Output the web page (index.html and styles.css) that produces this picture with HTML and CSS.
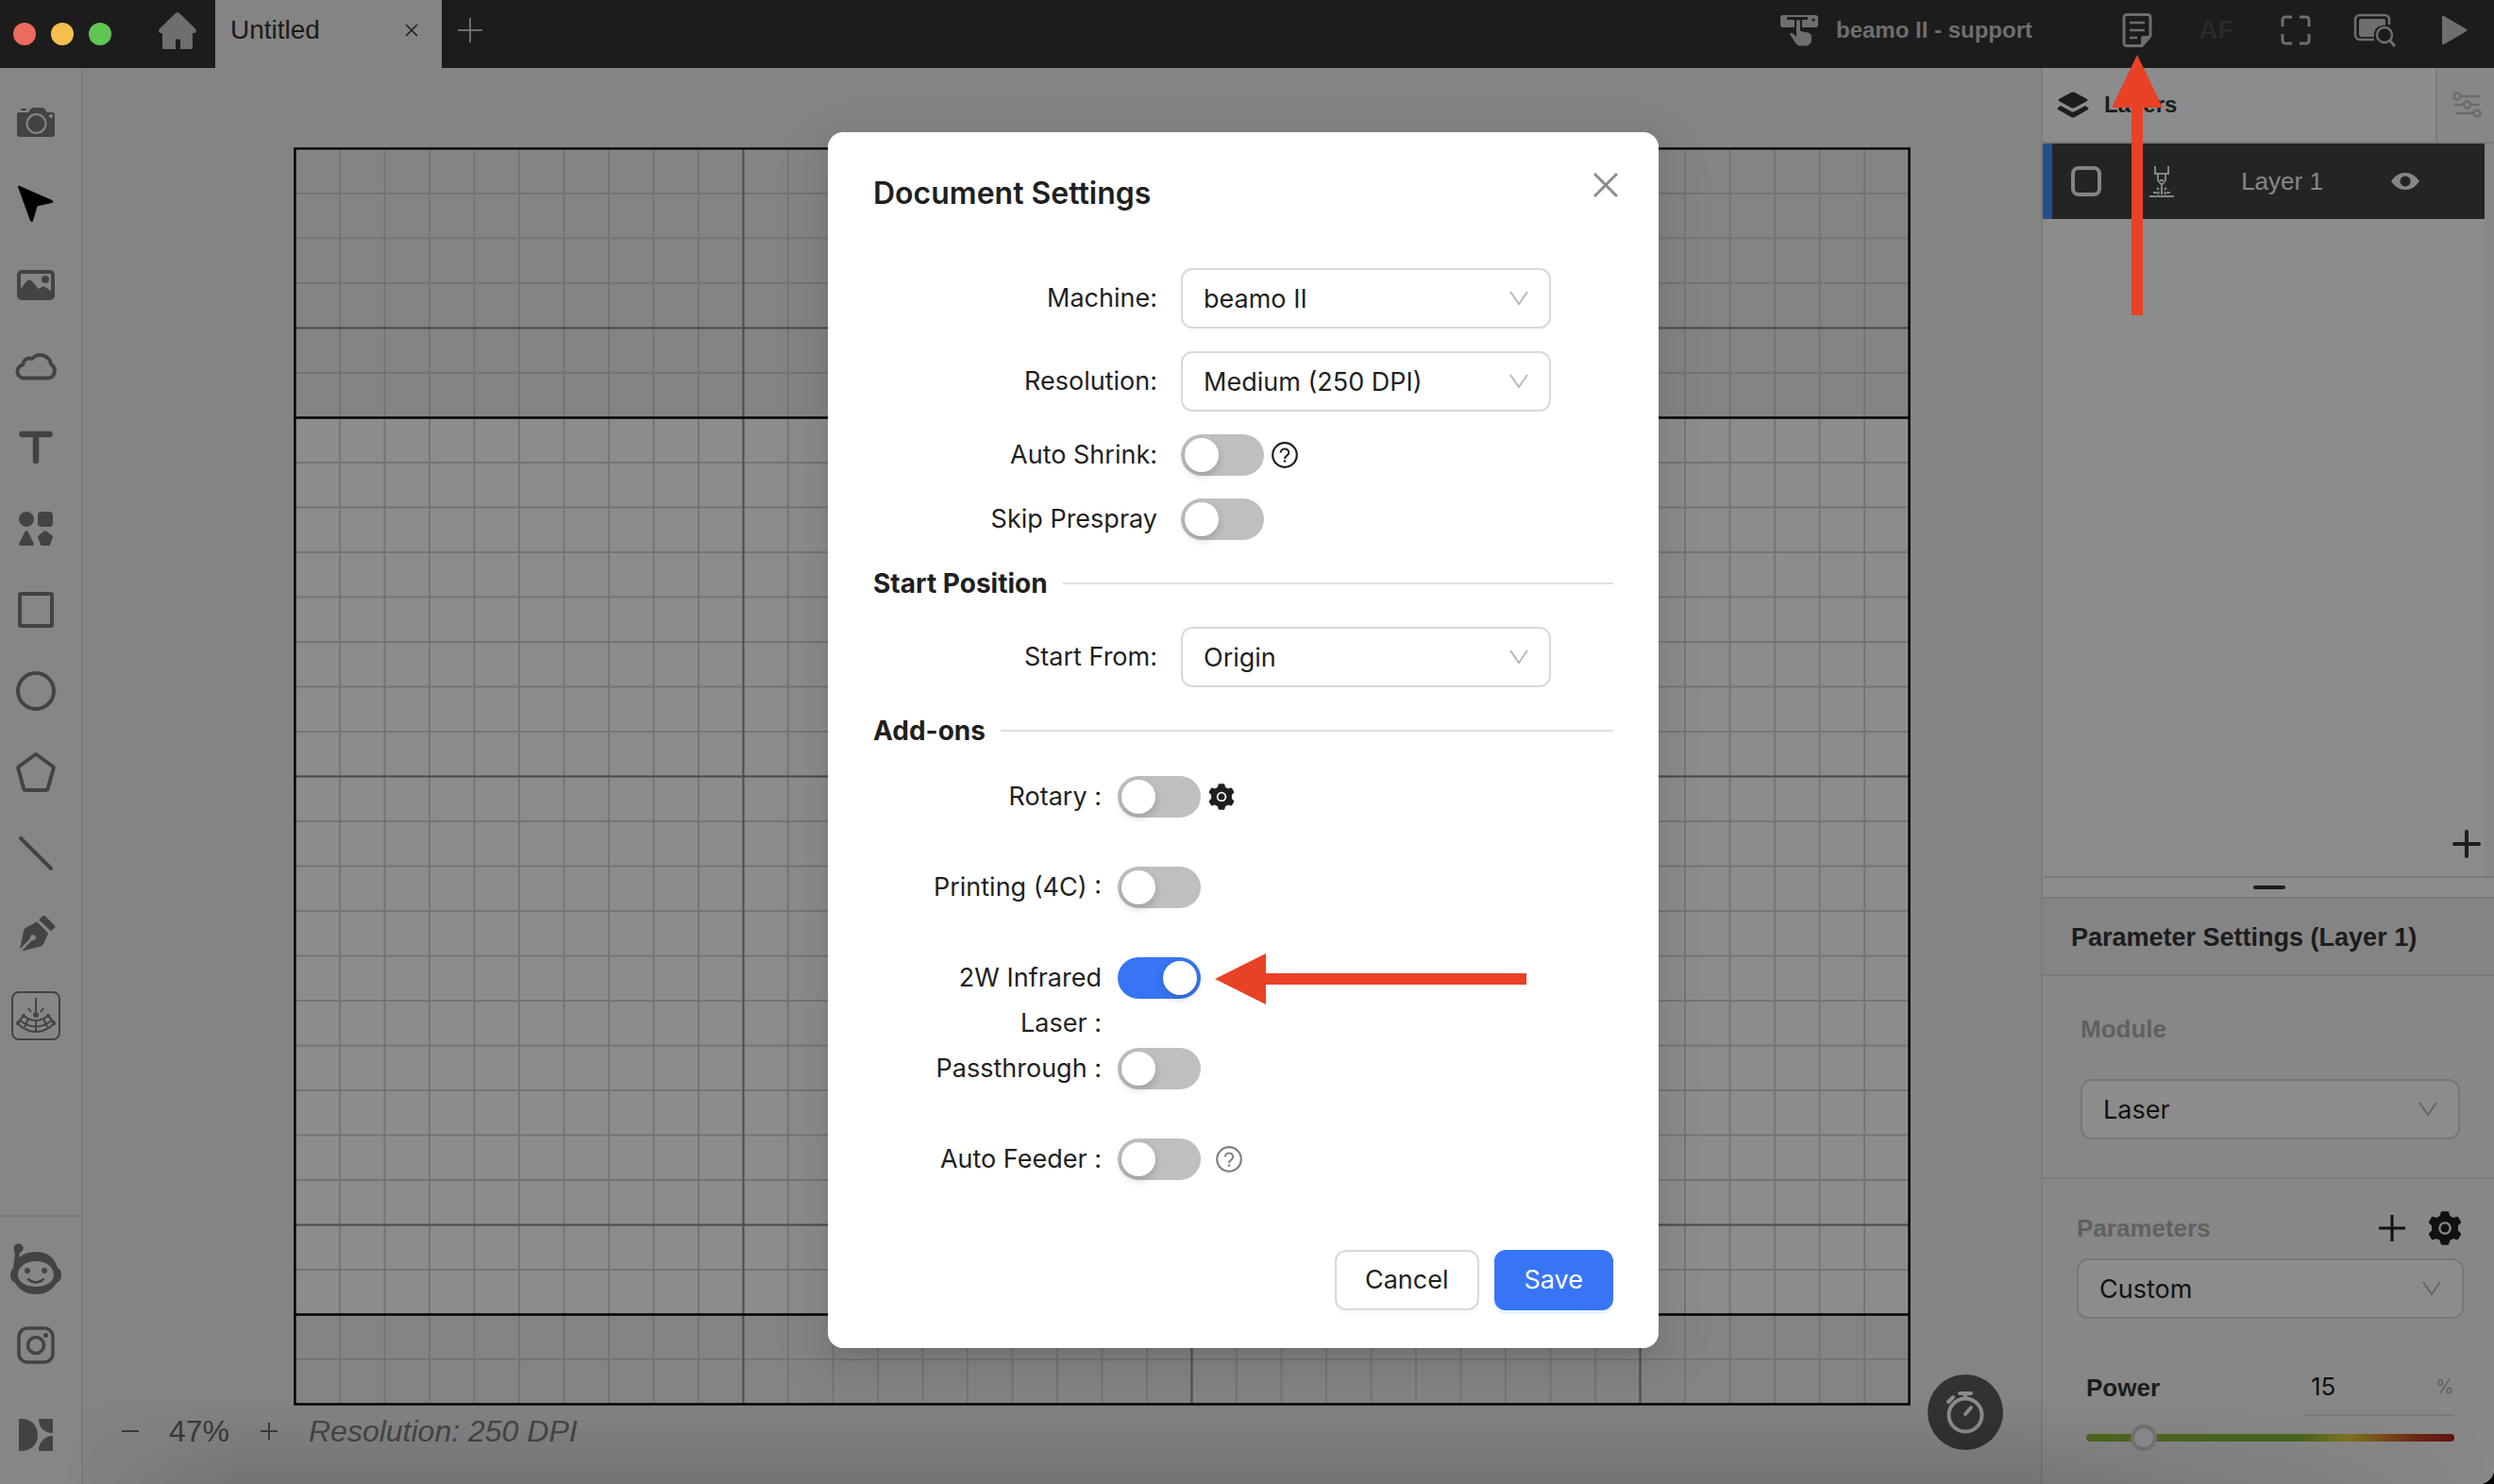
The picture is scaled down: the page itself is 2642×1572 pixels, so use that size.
FILE: index.html
```html
<!DOCTYPE html>
<html lang="en">
<head>
    <meta charset="UTF-8">
    <meta name="viewport" content="width=device-width, initial-scale=1.0">
    <title>Untitled</title>
    <link rel="stylesheet" href="styles.css">
</head>
<body>
    <div class="app">
        <!-- Title bar -->
        <header class="titlebar">
            <div class="traffic-lights">
                <span class="light red"></span>
                <span class="light yellow"></span>
                <span class="light green"></span>
            </div>
            <button type="button" class="home" aria-label="Home">
                <svg width="40" height="40" viewBox="0 0 40 40"><path fill="currentColor" d="M18.500 1.600a2.200 2.200 0 0 1 3 0L39 18.500c1.600 1.600.8 4.500-1.500 4.500H36v15.500a1.500 1.500 0 0 1-1.500 1.500H23V29.500h-5V40H5.500A1.500 1.500 0 0 1 4 38.500V23H2.500C.2 23-.6 20.100 1 18.500z"/></svg>
            </button>
            <div class="tab">
                <span>Untitled</span>
                <button type="button" aria-label="Close tab">
                    <svg width="14" height="14" viewBox="0 0 14 14"><path d="M1 1l12 12M13 1L1 13" stroke="currentColor" stroke-width="1.500"/></svg>
                </button>
            </div>
            <button type="button" class="new-tab" aria-label="New tab">
                <svg width="26" height="26" viewBox="0 0 26 26"><path d="M13 0v26M0 13h26" stroke="currentColor" stroke-width="2"/></svg>
            </button>

            <button type="button" class="machine">
                <svg width="42" height="34" viewBox="0 0 42 34"><path fill="currentColor" fill-rule="evenodd" d="M4 1h34a3 3 0 0 1 3 3v7a3 3 0 0 1-3 3H24V6h6V3H8v3h8v8H4a3 3 0 0 1-3-3V4a3 3 0 0 1 3-3zm32 3.500a1.500 1.500 0 1 0 .1 0z"/><path fill="currentColor" d="M18 8a2 2 0 0 1 4 0v10l8 1.500c2.500.5 4 2 4 4.500v3c0 4-3 6.500-6 6.500h-6c-3 0-4-1.500-5.500-4L11.500 22c-.8-1.600.8-3 2.300-1.800L18 24z"/></svg>
                <span>beamo II - support</span>
            </button>
            <button type="button" class="tool" aria-label="Document settings">
                <svg width="32" height="38" viewBox="0 0 32 38"><path fill="none" stroke="currentColor" stroke-width="3" d="M5 2.500h22a3 3 0 0 1 3 3V25l-9 10.500H5a3 3 0 0 1-3-3v-27a3 3 0 0 1 3-3z"/><path fill="currentColor" d="M20 36V27a2 2 0 0 1 2-2h9z"/><path stroke="currentColor" stroke-width="2.500" d="M8 11h16M8 19h16M8 27h8"/></svg>
                <svg class="arrow-up" width="56" height="278" viewBox="0 0 56 278"><path d="M28 1l27 56H34v220H22V57H1z"/></svg>
            </button>
            <button type="button" class="tool auto-focus">AF</button>
            <button type="button" class="tool" aria-label="Frame">
                <svg width="32" height="32" viewBox="0 0 32 32"><path fill="none" stroke="currentColor" stroke-width="3" d="M2 12V5a3 3 0 0 1 3-3h7M20 2h7a3 3 0 0 1 3 3v7M30 20v7a3 3 0 0 1-3 3h-7M12 30H5a3 3 0 0 1-3-3v-7"/></svg>
            </button>
            <button type="button" class="tool" aria-label="Preview">
                <svg width="46" height="36" viewBox="0 0 46 36"><path fill="none" stroke="currentColor" stroke-width="2.500" d="M22 28H7a5 5 0 0 1-5-5V7a5 5 0 0 1 5-5h26a5 5 0 0 1 5 5v5"/><path fill="currentColor" d="M8 6h24a2 2 0 0 1 2 2v5a10 10 0 0 0-12 12H8a2 2 0 0 1-2-2V8a2 2 0 0 1 2-2z"/><circle cx="33" cy="23" r="8" fill="none" stroke="currentColor" stroke-width="2.500"/><path stroke="currentColor" stroke-width="3" d="M38 28l6 7"/></svg>
            </button>
            <button type="button" class="tool" aria-label="Start">
                <svg width="28" height="32" viewBox="0 0 28 32"><path fill="currentColor" d="M1 2Q1 0 3 1l24 14q1 1 0 2L3 31q-2 1-2-1z"/></svg>
            </button>
        </header>

        <main class="main">
            <!-- Drawing tools -->
            <nav class="sidebar">
                <div class="tools">
                    <button type="button" aria-label="Camera"><svg width="42" height="34" viewBox="0 0 42 34"><path fill="currentColor" d="M6 2h4q1 0 1 1v1H5V3q0-1 1-1zM3 6h10l3-4q1-1 3-1h8q2 0 3 1l3 4h5q3 0 3 3v20q0 3-3 3H4q-3 0-3-3V8q0-2 2-2z"/><circle cx="21.500" cy="18" r="10" fill="none" stroke="#f5f5f5" stroke-width="2"/><circle cx="37" cy="10" r="2" fill="#f5f5f5"/></svg></button>
                    <button type="button" class="active" aria-label="Select"><svg width="40" height="40" viewBox="0 0 40 40"><path fill="currentColor" d="M1 2Q1 0 3 1l34 15q3 2 0 3l-14 3q-2 0-2 2l-4 14q-1 2-3 0z"/></svg></button>
                    <button type="button" aria-label="Image"><svg width="40" height="32" viewBox="0 0 40 32"><rect x="2" y="2" width="36" height="28" rx="3" fill="none" stroke="currentColor" stroke-width="4"/><path fill="currentColor" d="M3 21l7-9q3-3 6 0l7 8 3-2q2-1 4 0l8 6v6H3z"/><circle cx="30" cy="10" r="4" fill="currentColor"/></svg></button>
                    <button type="button" aria-label="My cloud"><svg width="48" height="30" viewBox="0 0 48 30"><path fill="none" stroke="currentColor" stroke-width="4" stroke-linejoin="round" d="M10 27.500h28a8 8 0 0 0 2-14.500A11.500 11.500 0 0 0 20 7q-8-2-10 6.500a7.200 7.200 0 0 0 0 14z"/></svg></button>
                    <button type="button" aria-label="Text"><svg width="36" height="36" viewBox="0 0 36 36"><path stroke="currentColor" stroke-width="6.500" stroke-linecap="round" d="M3.500 4h29M18 5v27"/></svg></button>
                    <button type="button" aria-label="Elements"><svg width="36" height="36" viewBox="0 0 36 36" fill="currentColor"><circle cx="8" cy="8" r="8"/><rect x="20" width="16" height="16" rx="4"/><path d="M6.500 21q1.500-2 3 0L16 34q0 2-2 2H2q-2 0-2-2zM27 20.500q1-.8 2 0l6 4.500q1 1 1 2l-3 8q0 1-1 1h-8q-1 0-1-1l-3-8q0-1 1-2z"/></svg></button>
                    <button type="button" aria-label="Rectangle"><svg width="38" height="38" viewBox="0 0 38 38"><rect x="2" y="2" width="34" height="34" rx="1" fill="none" stroke="currentColor" stroke-width="4"/></svg></button>
                    <button type="button" aria-label="Ellipse"><svg width="42" height="42" viewBox="0 0 42 42"><circle cx="21" cy="21" r="19" fill="none" stroke="currentColor" stroke-width="4"/></svg></button>
                    <button type="button" aria-label="Polygon"><svg width="42" height="42" viewBox="0 0 42 42"><path fill="none" stroke="currentColor" stroke-width="4" stroke-linejoin="round" d="M20 2.500q1-.8 2 0l17 12.500q1 1 .7 2l-6 21q-.5 2-2 2H10q-1.500 0-2-2L2.300 17q-.3-1 .7-2z"/></svg></button>
                    <button type="button" aria-label="Line"><svg width="36" height="36" viewBox="0 0 36 36"><path stroke="currentColor" stroke-width="4" stroke-linecap="round" d="M2 2l32 32"/></svg></button>
                    <button type="button" aria-label="Pen"><svg width="42" height="40" viewBox="0 0 42 40"><path fill="currentColor" d="M26 2l3-2q1-.5 2 .5l10 10q1 1 0 2l-3 3q-1 1-2 0L25 5q-1-1 1-3zM21 7q1-.6 2 .3L33.500 18q.8 1-.1 2.500L29 30q-1 2-3 2.500L6 37.500 17 26a3 3 0 1 0-2-2L4 35.500 8 16q.5-2 2-3z"/></svg></button>
                    <button type="button" aria-label="Curve engraving"><svg width="52" height="52" viewBox="0 0 52 52" fill="none" stroke="currentColor" stroke-width="2"><rect x="1" y="1" width="50" height="50" rx="7"/><path d="M26 7v18M18 18l3 4M34 18l-3 4M13 26q13 10 26 0M9 31q17 13 34 0M6 34q20 18 40 0M13 26L6 34M39 26l7 8M18 29l-4 9M34 29l4 9M26 31v12"/><g fill="currentColor" stroke="none"><circle cx="26" cy="25" r="3"/><circle cx="13" cy="26" r="2"/><circle cx="39" cy="26" r="2"/><circle cx="7" cy="34" r="2"/><circle cx="45" cy="34" r="2"/></g></svg></button>
                </div>
                <div class="links">
                    <button type="button" aria-label="Support"><svg width="54" height="56" viewBox="0 0 54 56"><path fill="currentColor" fill-rule="evenodd" d="M4 8a5 5 0 1 1 6 3l-1 5q7-6 18-6c13 0 20 7 23 17q4 2 4 8t-5 8q-7 12-22 12T5 43q-5-2-5-8 0-5 3-8L5 12q-1-1-1-4zM27 20C15 20 8 27 8 34.500S16 47 27 47s19-5 19-12.500S39 20 27 20z"/><circle cx="18" cy="30" r="3" fill="currentColor"/><circle cx="36" cy="30" r="3" fill="currentColor"/><path fill="none" stroke="currentColor" stroke-width="2.500" stroke-linecap="round" d="M19 39q8 7 16 0"/></svg></button>
                    <button type="button" aria-label="Instagram"><svg width="40" height="40" viewBox="0 0 40 40" fill="none" stroke="currentColor" stroke-width="3.500"><rect x="2" y="2" width="36" height="36" rx="9"/><circle cx="20" cy="20" r="8.500"/><circle cx="30.500" cy="9.500" r="2.500" fill="currentColor" stroke="none"/></svg></button>
                    <button type="button" aria-label="Design market"><svg width="36" height="34" viewBox="0 0 36 34"><path fill="currentColor" d="M0 0h3c10 0 17 7 17 17S13 34 3 34H0zM21 0h15v15C27 15 21 9 21 0zM36 18v16H21c0-9 6-16 15-16z"/></svg></button>
                </div>
            </nav>

            <!-- Canvas -->
            <section class="workspace">
                <svg class="workarea" viewBox="-3 -3 3606 2806">
                    <defs>
                        <pattern id="minor" x="-50" y="-50" width="100" height="100" patternUnits="userSpaceOnUse">
                            <path d="M50 0V100M0 50H100" stroke="#d4d4d4" stroke-width="4"/>
                        </pattern>
                        <pattern id="major" x="-500" y="-100" width="1000" height="1000" patternUnits="userSpaceOnUse">
                            <path d="M500 0V1000M0 500H1000" stroke="#8c8c8c" stroke-width="4"/>
                        </pattern>
                    </defs>
                    <rect y="600" width="3600" height="2000" fill="#fff"/>
                    <rect width="3600" height="2800" fill="url(#minor)"/>
                    <rect width="3600" height="2800" fill="url(#major)"/>
                    <path fill="none" stroke="#000" stroke-width="5" d="M0 0H3600V2800H0zM0 600H3600M0 2600H3600"/>
                </svg>
                <div class="status">
                    <button type="button" aria-label="Zoom out"><svg width="20" height="20" viewBox="0 0 20 20"><path d="M1 10h18" stroke="currentColor" stroke-width="2"/></svg></button>
                    <span class="ratio">47%</span>
                    <button type="button" aria-label="Zoom in"><svg width="20" height="20" viewBox="0 0 20 20"><path d="M1 10h18M10 1v18" stroke="currentColor" stroke-width="2"/></svg></button>
                    <em>Resolution: 250 DPI</em>
                </div>
                <button type="button" class="timer" aria-label="Estimate time">
                    <svg width="42" height="46" viewBox="0 0 42 46" fill="none" stroke="currentColor" stroke-width="4"><circle cx="21" cy="26" r="17.500"/><path d="M15 3h12M21 3v5M3 12l5-5M21 25l6-7" stroke-linecap="round"/></svg>
                </button>
            </section>

            <!-- Right panel -->
            <aside class="panel">
                <div class="panel-tabs">
                    <button type="button" class="layers-tab">
                        <svg width="34" height="28" viewBox="0 0 34 28"><path fill="currentColor" d="M15 1q2-1 4 0l13 7q1 1 0 2l-13 7q-2 1-4 0L2 10q-1-1 0-2zM4 15l11 6q2 1 4 0l11-6 3 2q1 1 0 2l-14 8q-2 1-4 0L1 19q-1-1 0-2z"/></svg>
                        <span>Layers</span>
                    </button>
                    <button type="button" class="objects-tab" aria-label="Objects">
                        <svg width="32" height="28" viewBox="0 0 32 28" fill="none" stroke="currentColor" stroke-width="2.500"><path d="M9 5h20M2 14h10M19 14h10M3 23h19"/><circle cx="5" cy="5" r="3.500"/><circle cx="15.500" cy="14" r="3.500"/><circle cx="26" cy="23" r="3.500"/></svg>
                    </button>
                </div>
                <div class="layer-list">
                    <div class="layer">
                        <input type="checkbox" aria-label="Select layer">
                        <svg class="laser-icon" width="26" height="34" viewBox="0 0 26 34" fill="none" stroke="currentColor" stroke-width="2"><path d="M6 1v8h3v7l4 5 4-5V9h3V1M8 9h10M11 16h4M13 19v12M0 33h26M8 24l2 2M18 24l-2 2M4 29h4M18 29h4M9 31l1-3M17 31l-1-3"/></svg>
                        <span class="layer-name">Layer 1</span>
                        <svg class="eye" width="32" height="20" viewBox="0 0 32 20"><path fill="currentColor" fill-rule="evenodd" d="M1 10Q7 1 16 1t15 9q-6 9-15 9T1 10zm15-5.500a5.500 5.500 0 1 0 .1 0z"/></svg>
                    </div>
                    <button type="button" class="add-layer" aria-label="Add layer"><svg width="30" height="30" viewBox="0 0 30 30"><path d="M15 2v26M2 15h26" stroke="currentColor" stroke-width="4" stroke-linecap="round"/></svg></button>
                </div>
                <div class="resizer"><span></span></div>
                <h2>Parameter Settings (Layer 1)</h2>
                <div class="module-block">
                    <label for="module">Module</label>
                    <div class="select">
                        <select id="module"><option>Laser</option></select>
                        <svg width="20" height="16" viewBox="0 0 20 16"><path d="M1 1l9 13 9-13"/></svg>
                    </div>
                </div>
                <div class="params-block">
                    <div class="params-head">
                        <label for="preset">Parameters</label>
                        <button type="button" aria-label="Add preset"><svg width="28" height="28" viewBox="0 0 28 28"><path d="M14 0v28M0 14h28" stroke="currentColor" stroke-width="3"/></svg></button>
                        <button type="button" aria-label="Manage presets"><svg width="36" height="36" viewBox="0 0 28 28"><use href="#gear"/></svg></button>
                    </div>
                    <div class="select">
                        <select id="preset"><option>Custom</option></select>
                        <svg width="20" height="16" viewBox="0 0 20 16"><path d="M1 1l9 13 9-13"/></svg>
                    </div>
                    <div class="power">
                        <label for="power">Power</label>
                        <div class="power-value">
                            <input type="text" id="power" value="15">
                            <span>%</span>
                        </div>
                    </div>
                    <input type="range" class="slider" min="0" max="100" value="13" aria-label="Power slider">
                </div>
            </aside>
        </main>

        <!-- Document settings dialog -->
        <div class="mask">
            <form class="modal" role="dialog" aria-labelledby="dialogTitle">
                <div class="modal-head">
                    <h1 id="dialogTitle">Document Settings</h1>
                    <button type="button" class="close" aria-label="Close"><svg width="26" height="26" viewBox="0 0 26 26"><path d="M1 1l24 24M25 1L1 25" stroke="currentColor" stroke-width="3"/></svg></button>
                </div>

                <div class="row">
                    <label for="machine">Machine:</label>
                    <div class="select">
                        <select id="machine"><option>beamo II</option></select>
                        <svg width="20" height="16" viewBox="0 0 20 16"><path d="M1 1l9 13 9-13"/></svg>
                    </div>
                </div>
                <div class="row">
                    <label for="resolution">Resolution:</label>
                    <div class="select">
                        <select id="resolution"><option>Medium (250 DPI)</option></select>
                        <svg width="20" height="16" viewBox="0 0 20 16"><path d="M1 1l9 13 9-13"/></svg>
                    </div>
                </div>
                <div class="row">
                    <label for="autoShrink">Auto Shrink:</label>
                    <div class="control">
                        <input type="checkbox" class="switch" id="autoShrink">
                        <svg class="help" width="28" height="28" viewBox="0 0 28 28"><use href="#question"/></svg>
                    </div>
                </div>
                <div class="row">
                    <label for="skipPrespray">Skip Prespray</label>
                    <input type="checkbox" class="switch" id="skipPrespray">
                </div>

                <h3 class="divider">Start Position</h3>
                <div class="row">
                    <label for="startFrom">Start From:</label>
                    <div class="select">
                        <select id="startFrom"><option>Origin</option></select>
                        <svg width="20" height="16" viewBox="0 0 20 16"><path d="M1 1l9 13 9-13"/></svg>
                    </div>
                </div>

                <h3 class="divider">Add-ons</h3>
                <div class="addons">
                    <label for="rotary">Rotary :</label>
                    <div class="control">
                        <input type="checkbox" class="switch" id="rotary">
                        <svg class="gear" width="28" height="28" viewBox="0 0 28 28"><use href="#gear"/></svg>
                    </div>
                    <label for="printing">Printing (4C) :</label>
                    <div class="control"><input type="checkbox" class="switch" id="printing"></div>
                    <label for="infrared">2W Infrared Laser :</label>
                    <div class="control">
                        <input type="checkbox" class="switch" id="infrared" checked>
                        <svg class="arrow-left" width="332" height="56" viewBox="0 0 332 56"><path d="M1 28L55 1v21h276v12H55v21z"/></svg>
                    </div>
                    <label for="passthrough">Passthrough :</label>
                    <div class="control"><input type="checkbox" class="switch" id="passthrough"></div>
                    <label for="autoFeeder">Auto Feeder :</label>
                    <div class="control">
                        <input type="checkbox" class="switch" id="autoFeeder">
                        <svg class="help muted" width="28" height="28" viewBox="0 0 28 28"><use href="#question"/></svg>
                    </div>
                </div>

                <div class="modal-foot">
                    <button type="button" class="btn">Cancel</button>
                    <button type="submit" class="btn primary">Save</button>
                </div>
            </form>
        </div>
    </div>

    <!-- Shared icons -->
    <svg class="defs" width="0" height="0" aria-hidden="true">
        <symbol id="gear" viewBox="0 0 28 28">
            <path fill="currentColor" stroke="currentColor" stroke-width="1.500" stroke-linejoin="round" fill-rule="evenodd" d="M11.500 1h5l1 3.300 3.300 1.900 3.500-1 2.300 4-2.500 2.500v4.600l2.500 2.500-2.300 4-3.500-1-3.300 1.900-1 3.300h-5l-1-3.300-3.300-1.900-3.500 1-2.300-4 2.500-2.500v-4.600L1.400 9.200l2.300-4 3.500 1 3.300-1.900zM14 8a6 6 0 1 0 .1 0z"/>
            <circle cx="14" cy="14" r="3.500" fill="currentColor"/>
        </symbol>
        <symbol id="question" viewBox="0 0 28 28">
            <circle cx="14" cy="14" r="12.800" fill="none" stroke="currentColor" stroke-width="2.200"/>
            <path fill="none" stroke="currentColor" stroke-width="2" d="M9.700 11.500c0-5.500 8.600-5.500 8.600 0 0 3-4.300 3-4.300 6.500"/>
            <circle cx="14" cy="20.500" r="1.300" fill="currentColor"/>
        </symbol>
    </svg>
</body>
</html>
```
FILE: styles.css
```css
/* General Styles */
* {
    box-sizing: border-box;
}

body {
    margin: 0;
    background-color: #000;
    font-family: "Liberation Sans", Arial, sans-serif;
    font-size: 26px;
    color: #333;
}

button {
    display: flex;
    align-items: center;
    justify-content: center;
    padding: 0;
    border: none;
    background: none;
    font: inherit;
    color: inherit;
    cursor: pointer;
}

.defs {
    position: absolute;
}

.app {
    position: relative;
    display: flex;
    flex-direction: column;
    min-height: 100vh;
    border-radius: 0 0 16px 0;
    overflow: hidden;
    background-color: #f0f0f0;
}

/* soft shade along the bottom edge of the window */
.app::after {
    content: "";
    position: absolute;
    z-index: 5;
    left: 60px;
    right: 0;
    bottom: 0;
    height: 90px;
    background: linear-gradient(to bottom, transparent, rgba(0, 0, 0, 0.12));
    -webkit-mask-image: linear-gradient(to right, transparent, #000 200px, #000 80%, transparent);
    mask-image: linear-gradient(to right, transparent, #000 200px, #000 80%, transparent);
    pointer-events: none;
}

/* Title bar */
.titlebar {
    display: flex;
    height: 72px;
    background-color: #333;
    color: #c8c8c8;
}

.titlebar > button {
    padding-bottom: 8px;
}

.traffic-lights {
    position: relative;
    z-index: 20;
    display: flex;
    align-items: center;
    gap: 16px;
    padding-left: 14px;
}

.light {
    width: 24px;
    height: 24px;
    border-radius: 50%;
}

.red { background-color: #ec6a5e; }
.yellow { background-color: #f4bf4f; }
.green { background-color: #61c554; }

.home {
    width: 110px;
    padding-left: 30px;
}

.tab {
    display: flex;
    align-items: center;
    justify-content: space-between;
    width: 240px;
    padding: 0 25px 8px 16px;
    background-color: #f0f0f0;
    color: #333;
    font-size: 28px;
}

.new-tab {
    width: 60px;
}

.machine {
    gap: 18px;
    margin-left: auto;
    margin-right: 69px;
    font-size: 24px;
    font-weight: bold;
}

.tool {
    position: relative;
    width: 84px;
}

.auto-focus {
    font-size: 28px;
    font-weight: bold;
    color: #4d4d4d;
}

.arrow-up {
    position: absolute;
    z-index: 20;
    top: 57px;
    left: 14px;
}

.arrow-up,
.arrow-left {
    fill: #e94126;
    pointer-events: none;
}

.main {
    flex: 1;
    display: grid;
    grid-template-columns: 88px 1fr 480px;
}

/* Drawing tools */
.sidebar {
    display: flex;
    flex-direction: column;
    justify-content: space-between;
    border-right: 2px solid #e0e0e0;
    background-color: #f5f5f5;
    color: #7a7a7a;
}

.tools {
    padding-top: 15px;
}

.tools button {
    width: 76px;
    height: 86px;
}

.tools .active {
    color: #000;
}

.links {
    padding: 14px 0 12px;
    border-top: 2px solid #e0e0e0;
}

.links button {
    width: 76px;
    height: 81px;
}

.links button:last-child {
    margin-top: 14px;
}

/* Canvas */
.workspace {
    position: relative;
    padding-top: 84px;
}

.workarea {
    display: block;
    width: auto;
    margin: 0 138px 0 223px;
}

.status {
    display: flex;
    align-items: center;
    margin-top: 9px;
    padding-left: 40px;
    font-size: 32px;
    line-height: 36px;
    color: #6c6c6c;
}

.ratio {
    width: 64px;
    margin: 0 32px 0 31px;
}

.status em {
    margin-left: 32px;
    color: #808080;
}

.timer {
    position: absolute;
    right: 40px;
    bottom: 36px;
    width: 80px;
    height: 80px;
    border-radius: 50%;
    background-color: #5c5c5c;
    color: #fff;
}

/* Right panel */
.panel {
    border-left: 2px solid #e0e0e0;
    background-color: #f6f6f6;
}

.panel-tabs {
    display: flex;
    height: 80px;
    border-bottom: 2px solid #e0e0e0;
}

.layers-tab {
    flex: 1;
    justify-content: flex-start;
    gap: 16px;
    padding-left: 15px;
    background-color: #fff;
    font-size: 24px;
    font-weight: bold;
}

.objects-tab {
    width: 62px;
    padding-left: 4px;
    border-left: 2px solid #e0e0e0;
    color: #c4c4c4;
}

.layer-list {
    display: flex;
    flex-direction: column;
    justify-content: space-between;
    height: 776px;
    margin-right: 10px;
    background-color: #fff;
}

.layer {
    display: flex;
    align-items: center;
    height: 80px;
    padding: 0 68px 0 20px;
    border-left: 10px solid #4190ff;
    background-color: #424242;
    color: #f5f5f5;
}

.layer input {
    appearance: none;
    width: 32px;
    height: 32px;
    margin: 0;
    border: 4px solid #f0f0f0;
    border-radius: 8px;
}

.laser-icon {
    margin-left: 51px;
}

.layer-name {
    flex: 1;
    text-align: center;
}

.add-layer {
    align-self: flex-end;
    margin: 0 4px 19px 0;
}

.resizer {
    display: flex;
    justify-content: center;
    height: 24px;
    padding-left: 2px;
    border: solid #e0e0e0;
    border-width: 2px 0;
    background-color: #fff;
}

.resizer span {
    width: 34px;
    height: 4px;
    margin-top: 8px;
    border-radius: 2px;
    background-color: #333;
}

.panel h2 {
    margin: 0;
    padding: 2px 0 0 30px;
    border-bottom: 2px solid #e0e0e0;
    background-color: #f0f0f0;
    font-size: 27px;
    line-height: 78px;
}

.panel label {
    display: block;
    font-weight: bold;
    line-height: 36px;
}

.module-block {
    padding: 38px 36px 40px 40px;
    border-bottom: 2px solid #e0e0e0;
}

.module-block label {
    margin-bottom: 35px;
    color: #b0b0b0;
}

.params-block {
    padding: 34px 32px 34px 36px;
}

.params-head {
    display: flex;
    align-items: center;
    gap: 24px;
    height: 36px;
    margin-bottom: 14px;
    padding-right: 2px;
    color: #1f1f1f;
}

.params-head label {
    flex: 1;
    color: #b0b0b0;
}

.power {
    display: flex;
    align-items: center;
    justify-content: space-between;
    margin: 42px 10px 0;
}

.power-value {
    display: flex;
    align-items: center;
    width: 160px;
    height: 61px;
    border-bottom: 2px solid #e0e0e0;
    font-family: Inter, sans-serif;
}

.power-value input {
    width: 140px;
    padding: 0 0 0 8px;
    border: none;
    background: none;
    font: inherit;
    color: #1f1f1f;
}

.power-value span {
    font-size: 20px;
    color: #b0b0b0;
}

.slider {
    appearance: none;
    display: block;
    width: calc(100% - 20px);
    height: 28px;
    margin: 9px 10px 0;
    background: none;
}

.slider::-webkit-slider-runnable-track {
    height: 8px;
    border-radius: 4px;
    background: linear-gradient(to right, #8fc33c, #82b838 58%, #e8d33e 71%, #c8452a 90%, #b02418);
}

.slider::-webkit-slider-thumb {
    appearance: none;
    width: 28px;
    height: 28px;
    margin-top: -10px;
    border: 4px solid #d4d4d4;
    border-radius: 50%;
    background-color: #fff;
}

/* Drop-downs */
.select {
    display: grid;
    align-items: center;
}

.select select,
.select svg {
    grid-area: 1 / 1;
}

.select select {
    appearance: none;
    width: 100%;
    height: 64px;
    padding: 0 22px;
    border: 2px solid #d9d9d9;
    border-radius: 12px;
    background-color: #fff;
    font-family: Inter, sans-serif;
    font-size: 27px;
    color: #1f1f1f;
}

.select svg {
    justify-self: end;
    margin-right: 24px;
    fill: none;
    stroke: #b8b8b8;
    stroke-width: 2px;
    pointer-events: none;
}

/* Dialog */
.mask {
    position: absolute;
    inset: 0;
    z-index: 10;
    display: flex;
    align-items: flex-start;
    justify-content: center;
    padding: 140px 8px 0 0;
    background-color: rgba(0, 0, 0, 0.45);
}

.modal {
    display: flex;
    flex-direction: column;
    gap: 24px;
    width: 880px;
    padding: 40px 48px;
    border-radius: 16px;
    background-color: #fff;
    box-shadow: 0 12px 32px rgba(0, 0, 0, 0.08), 0 6px 12px -8px rgba(0, 0, 0, 0.12), 0 18px 56px 16px rgba(0, 0, 0, 0.05);
    font-family: Inter, sans-serif;
    font-size: 27px;
    line-height: 48px;
    color: #1f1f1f;
}

.modal-head {
    display: flex;
    align-items: flex-start;
    justify-content: space-between;
    margin-bottom: 30px;
}

.modal h1 {
    margin: 0;
    font-size: 32px;
    font-weight: 600;
    line-height: 50px;
}

.close {
    margin: 3px -5px 0 0;
    color: #8c8c8c;
}

.row {
    display: grid;
    grid-template-columns: 301px 392px;
    column-gap: 25px;
    align-items: center;
}

.row label {
    text-align: right;
    line-height: 44px;
}

.divider {
    display: flex;
    align-items: center;
    gap: 16px;
    margin: 0;
    font-size: 28px;
    font-weight: 700;
    line-height: 44px;
}

.divider::after {
    content: "";
    flex: 1;
    height: 2px;
    background-color: #e0e0e0;
}

.control {
    position: relative;
    display: flex;
    align-items: center;
    height: 44px;
}

.addons {
    display: grid;
    grid-template-columns: 242px 1fr;
    grid-auto-rows: 96px;
    column-gap: 17px;
}

.addons label {
    padding-left: 50px;
    text-align: right;
}

.addons .control {
    height: 48px;
}

.switch {
    appearance: none;
    flex: none;
    width: 88px;
    height: 44px;
    margin: 0;
    padding: 4px;
    border-radius: 22px;
    background-color: #bfbfbf;
    cursor: pointer;
}

.switch::before {
    content: "";
    display: block;
    width: 36px;
    height: 36px;
    border-radius: 50%;
    background-color: #fff;
    box-shadow: 0 4px 8px rgba(0, 35, 11, 0.2);
}

.switch:checked {
    background-color: #3875f6;
}

.switch:checked::before {
    margin-left: auto;
}

.help,
.gear {
    margin-left: 8px;
}

.muted {
    margin-left: 16px;
    color: #808080;
}

.arrow-left {
    position: absolute;
    top: -3px;
    left: 102px;
}

.modal-foot {
    display: flex;
    justify-content: flex-end;
    gap: 16px;
}

.btn {
    height: 64px;
    padding: 0 30px;
    border: 2px solid #d9d9d9;
    border-radius: 12px;
    background-color: #fff;
    box-shadow: 0 4px 0 rgba(0, 0, 0, 0.02);
}

.primary {
    border-color: #3875f6;
    background-color: #3875f6;
    box-shadow: 0 4px 0 rgba(5, 145, 255, 0.1);
    color: #fff;
}
```
